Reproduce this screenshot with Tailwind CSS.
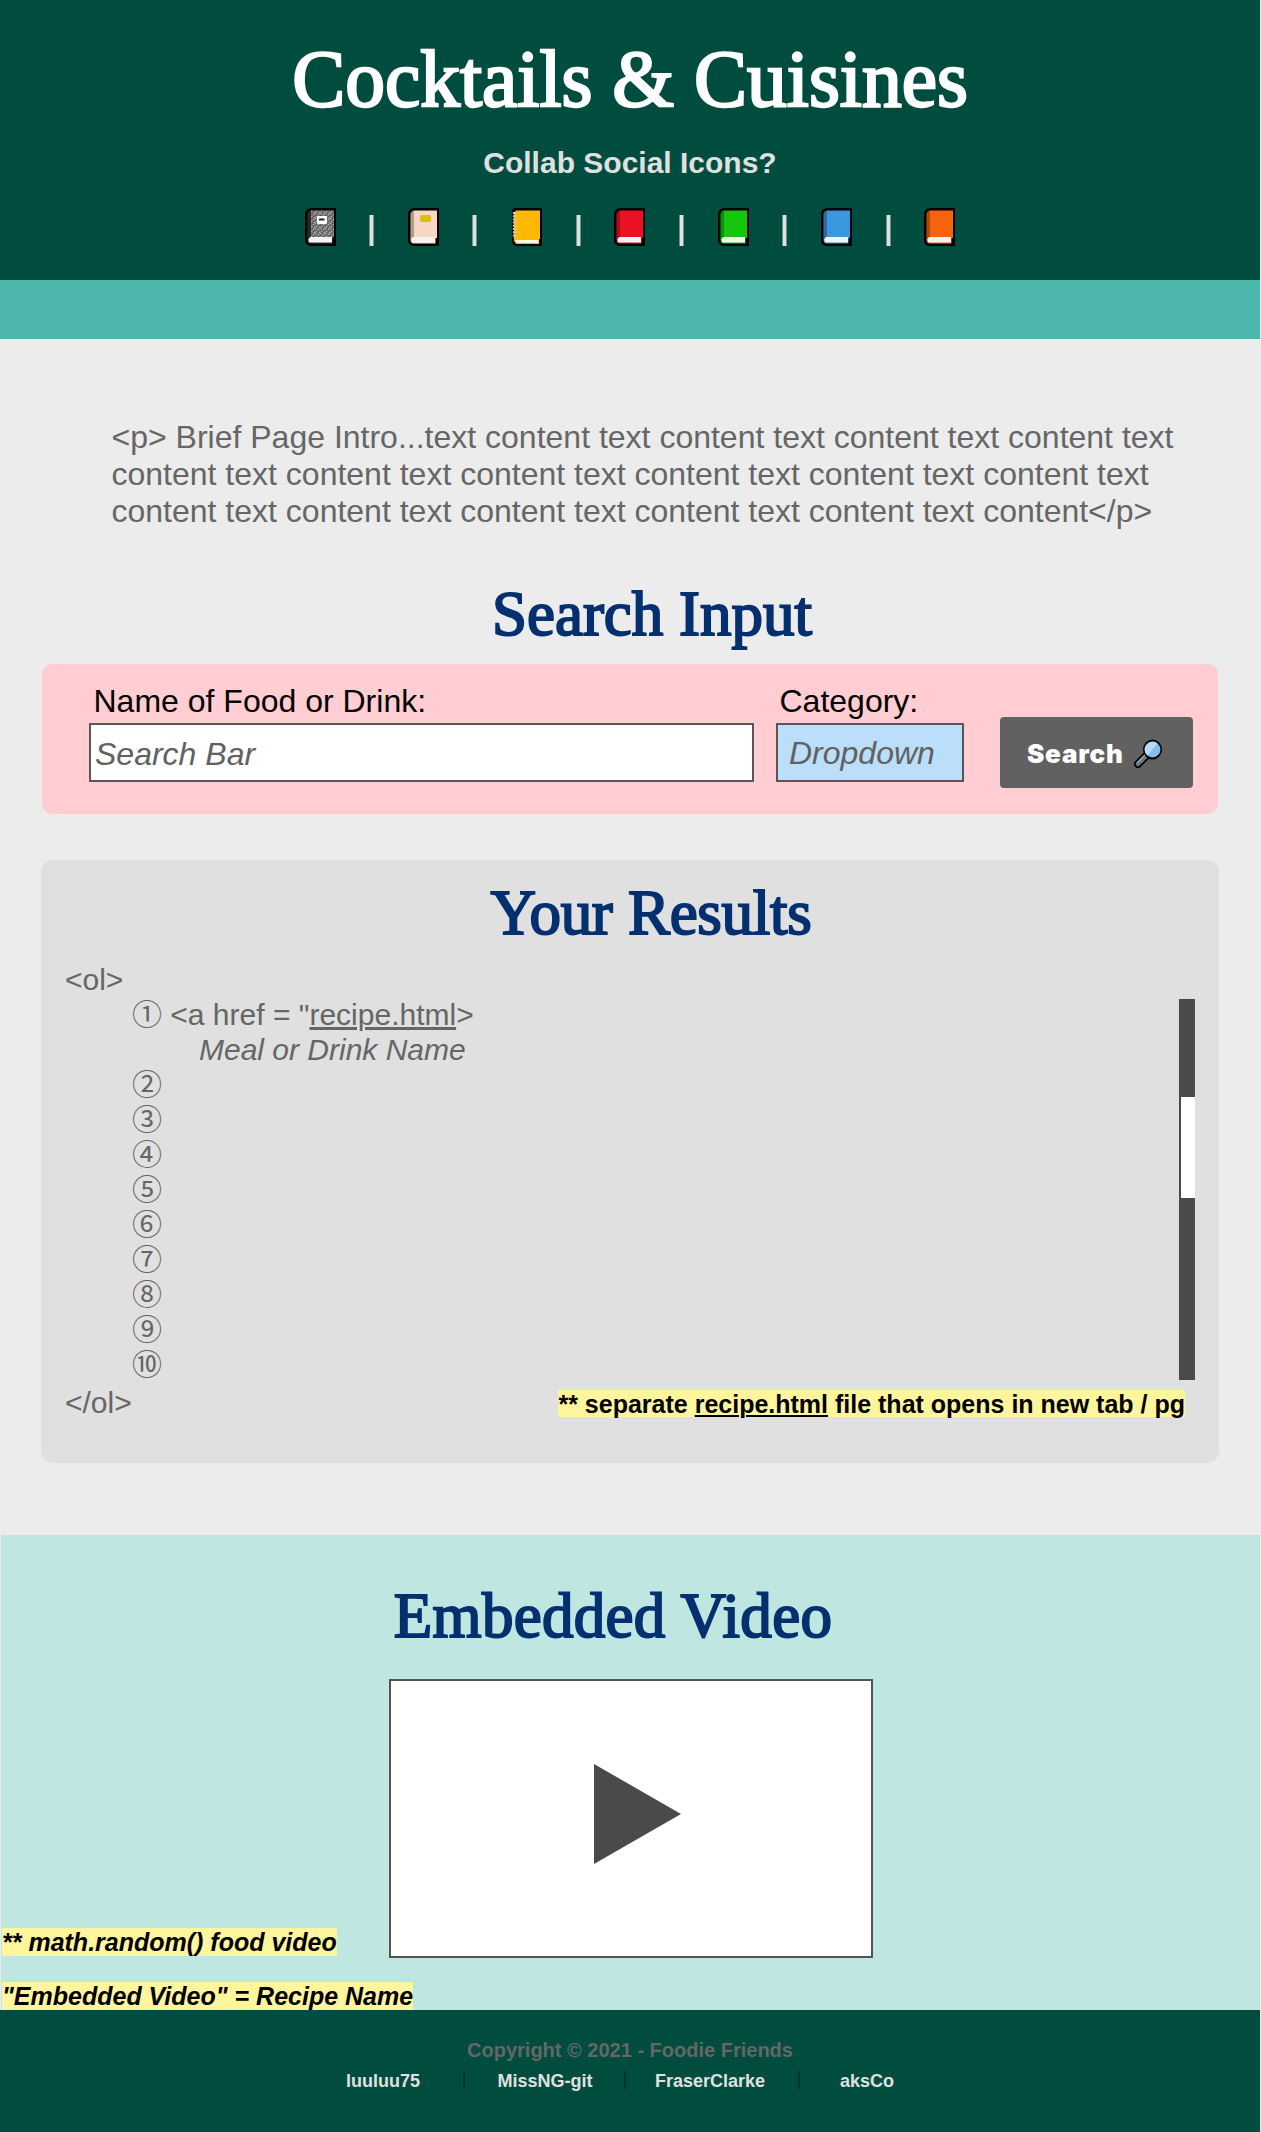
<!DOCTYPE html>
<html lang="en">
<head>
<meta charset="utf-8">
<title>Cocktails &amp; Cuisines</title>
<script src="https://cdn.jsdelivr.net/npm/@tailwindcss/browser@4"></script>
</head>
<body class="w-[1261px] bg-[#ececec] font-['Liberation_Sans',Arial,sans-serif] text-[#666666]">
<svg class="absolute h-0 w-0">
  <symbol id="book" viewBox="0 0 31 38">
    <path d="M6 0H31V38H5Q0 37 0 32V6Q0 1 6 0Z" fill="#000"/>
    <path d="M6 2.5H29V30H27.5V35.5H6Q3 35.500 2.500 32V6Q3 3 6 2.500Z" fill="currentColor"/>
    <path d="M6 2.500V29Q3.500 29 2.500 32V6Q3 3 6 2.500Z" fill="#000" opacity=".28"/>
    <path d="M5.500 29H27V34.500H5Q3 34 3.500 31.500Q4 29.500 5.500 29Z" fill="#f3f3f3"/>
  </symbol>
  <pattern id="speck" width="5" height="5" patternUnits="userSpaceOnUse">
    <rect width="5" height="5" fill="#747474"/>
    <path d="M0 0h1v1h-1zM3 1h1v1h-1zM1 3h1v1h-1zM4 4h1v1h-1z" fill="#b8b8b8"/>
    <path d="M2 0h1v1h-1zM0 2h1v1h-1zM3 3h1v1h-1z" fill="#555"/>
  </pattern>
</svg>

<header class="flex h-[280px] w-[1260px] flex-col items-center bg-[#004d40] pt-[39px]">
  <h1 class="text-[79.5px] leading-[80px] whitespace-nowrap text-white [-webkit-text-stroke:2.4px_white] font-['Liberation_Serif',serif]">Cocktails &amp; Cuisines</h1>
  <p class="mt-[26px] text-[30px] leading-[36px] font-bold text-[#e0e0e0]">Collab Social Icons?</p>
  <nav class="mt-[27px] flex h-[38px] w-[651px] items-end justify-between">
    <svg class="h-[38px] w-[31px] text-[#3a3a3a]" viewBox="0 0 31 38"><use href="#book"/><rect x="6" y="2.500" width="23" height="26.500" fill="url(#speck)"/><rect x="12" y="8" width="10" height="8" rx="1" fill="#fff"/><rect x="14" y="10.500" width="5.500" height="2" fill="#222"/></svg>
    <span class="h-[31px] w-[5px] border-x border-[#6d948c] bg-[#e0e0e0]"></span>
    <svg class="h-[38px] w-[31px] text-[#f7d7c4]" viewBox="0 0 31 38"><use href="#book"/><rect x="12" y="7" width="11" height="7" rx="2" fill="#dfc000"/></svg>
    <span class="h-[31px] w-[5px] border-x border-[#6d948c] bg-[#e0e0e0]"></span>
    <svg class="h-[38px] w-[31px]" viewBox="0 0 31 38"><path d="M4 0H31V38H5Q1 37 1 32V4Q1 0 4 0Z"/><path d="M5 2.500H29V31H28V36H5L3 33V5Z" fill="#ffb900"/><path d="M4 32H27.500V34.800H6Z" fill="#fff"/><path d="M3.500 4V30" stroke="#d2c8b4" stroke-width="3.500" stroke-dasharray="2 1.200"/></svg>
    <span class="h-[31px] w-[5px] border-x border-[#6d948c] bg-[#e0e0e0]"></span>
    <svg class="h-[38px] w-[31px] text-[#e81224]"><use href="#book"/></svg>
    <span class="h-[31px] w-[5px] border-x border-[#6d948c] bg-[#e0e0e0]"></span>
    <svg class="h-[38px] w-[31px] text-[#16c60c]"><use href="#book"/></svg>
    <span class="h-[31px] w-[5px] border-x border-[#6d948c] bg-[#e0e0e0]"></span>
    <svg class="h-[38px] w-[31px] text-[#3a96dd]"><use href="#book"/></svg>
    <span class="h-[31px] w-[5px] border-x border-[#6d948c] bg-[#e0e0e0]"></span>
    <svg class="h-[38px] w-[31px] text-[#f7630c]"><use href="#book"/></svg>
  </nav>
</header>
<div class="h-[59px] w-[1260px] bg-[#4db6ac]"></div>

<main>
  <div class="h-[1196px] pt-20">
    <p class="ml-[111.5px] h-[160px] w-[1080px] text-[32px] leading-[36.8px]">&lt;p&gt; Brief Page Intro...text content text content text content text content text<br>content text content text content text content text content text content text<br>content text content text content text content text content text content&lt;/p&gt;</p>
    <h2 class="ml-[43px] text-center text-[63px] leading-[70px] text-[#05306f] [-webkit-text-stroke:2px_#05306f] font-['Liberation_Serif',serif]">Search Input</h2>

    <form class="mt-[15px] ml-[42px] flex h-[150px] w-[1176px] rounded-[10px] bg-[#ffcdd2] pt-[17px] pl-[47px] text-[32px]">
      <div class="w-[665px]">
        <label class="block h-[42px] pl-[4.5px] leading-10 text-black">Name of Food or Drink:</label>
        <div class="flex h-[59px] items-center border-2 border-[#5a5658] bg-white pt-[2px] pl-1 italic text-[#616161]">Search Bar</div>
      </div>
      <div class="ml-[22px] w-[188px]">
        <label class="block h-[42px] pl-[3.5px] leading-10 text-black">Category:</label>
        <div class="flex h-[59px] items-center border-2 border-[#5a5658] bg-[#bbdefb] pl-[11px] italic text-[#616161]">Dropdown</div>
      </div>
      <button type="button" class="mt-[36px] ml-[36px] flex h-[71px] w-[193px] items-center rounded-[4px] bg-[#616161] pl-[27px] text-white">
        <span class="w-[107px] pt-[3px] text-left text-[26px] leading-none font-black tracking-[0.8px] font-['Inter',sans-serif]">Search</span>
        <svg class="mt-[2px] h-[29px] w-[30px]" viewBox="0 0 30 29"><path d="M14 15 4 25" stroke="#000" stroke-width="8" stroke-linecap="round"/><path d="M13 16 4 25" stroke="#69797e" stroke-width="4.500" stroke-linecap="round"/><path d="M12 15 3 24" stroke="#9dabb0" stroke-width="1.300"/><ellipse cx="18.500" cy="10.500" rx="9.500" ry="10" fill="#000"/><circle cx="18.500" cy="10.500" r="7.900" fill="#83beec"/><path d="M10.800 11.500A7.900 7.900 0 0 1 23.500 4.500L13.500 16.500Q11 14.500 10.800 11.500Z" fill="#b4daf8"/></svg>
      </button>
    </form>

    <section class="mt-[46px] ml-[41px] h-[603px] w-[1178px] rounded-[12px] bg-[#e0e0e0] pt-[18px] text-[30px] leading-[35px]">
      <h2 class="ml-[42px] text-center text-[63px] leading-[70px] tracking-[-0.3px] text-[#05306f] [-webkit-text-stroke:2px_#05306f] font-['Liberation_Serif',serif]">Your Results</h2>
      <p class="mt-[14px] ml-[24px]">&lt;ol&gt;</p>
      <div class="ml-[91px] flex h-[385px] justify-between pt-[2px] pr-[24px]">
        <ol class="-mt-[2px] font-['Liberation_Sans','Noto_Sans_CJK_JP',sans-serif] [&>li]:h-[35px] [&>li]:whitespace-pre">
          <li>① &lt;a href = "<a class="underline">recipe.html</a>&gt;</li>
          <li class="pl-[67px] italic">Meal or Drink Name</li>
          <li>②</li><li>③</li><li>④</li><li>⑤</li><li>⑥</li><li>⑦</li><li>⑧</li><li>⑨</li><li>⑩</li>
        </ol>
        <div class="h-[381px] w-[16px] bg-[#4a4a4a] pt-[98px] pl-0.5"><div class="h-[101px] bg-white"></div></div>
      </div>
      <div class="flex justify-between pr-[34px] pl-[24px]">
        <span class="pt-[3px]">&lt;/ol&gt;</span>
        <p class="mt-[8px] h-[27px] bg-[#fff59d] text-[25px] leading-[28px] font-bold text-black">** separate <a class="underline decoration-2 underline-offset-2">recipe.html</a> file that opens in new tab / pg</p>
      </div>
    </section>
  </div>

  <section class="relative ml-px flex h-[475px] w-[1259px] flex-col items-center bg-[#bfe6e1] pt-[46px]">
    <h2 class="mr-[35px] text-[63px] leading-[70px] tracking-[0.3px] text-[#05306f] [-webkit-text-stroke:2px_#05306f] font-['Liberation_Serif',serif]">Embedded Video</h2>
    <div class="mt-[28px] ml-px flex h-[279px] w-[484px] items-center border-2 border-[#535353] bg-white pb-[9px] pl-[203px]">
      <svg class="h-[100px] w-[88px]" viewBox="0 0 88 100"><path d="M0 0 87 50 0 100Z" fill="#4a4a4a"/></svg>
    </div>
    <div class="absolute bottom-0 left-px flex flex-col items-start gap-[26px] text-[25px] leading-[28px] font-bold italic text-black">
      <p class="bg-[#fff59d]">** math.random() food video</p>
      <p class="bg-[#fff59d]">"Embedded Video" = Recipe Name</p>
    </div>
  </section>
</main>

<footer class="h-[122px] w-[1260px] bg-[#004d40] pt-[27px] font-bold">
  <p class="text-center text-[20px] leading-[26px]">Copyright © 2021 - Foodie Friends</p>
  <div class="mt-[5px] flex h-6 items-center pl-[346px] text-[18px] text-[#e0e0e0]">
    <span class="w-[117px] pt-0.5">luuluu75</span><span class="h-[18px] w-[2px] bg-[#00332a]"></span>
    <span class="ml-[32.5px] w-[126.5px] pt-0.5">MissNG-git</span><span class="h-[18px] w-[2px] bg-[#00332a]"></span>
    <span class="ml-[29px] w-[143px] pt-0.5">FraserClarke</span><span class="h-[18px] w-[2px] bg-[#00332a]"></span>
    <span class="ml-[40px] pt-0.5">aksCo</span>
  </div>
</footer>
</body>
</html>
